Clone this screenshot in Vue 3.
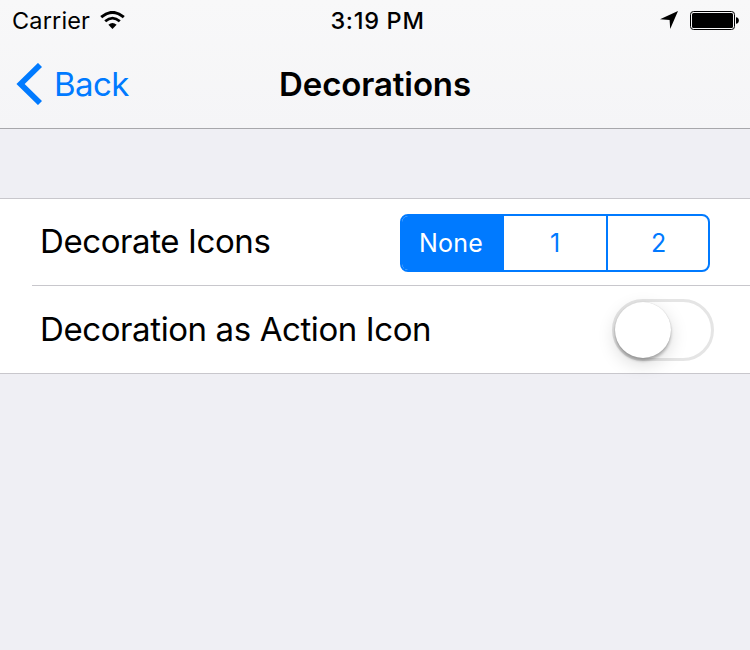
<template>
  <div class="screen">
    <header class="top-bar">
      <div class="status-bar">
        <div class="status-left">
          <span class="carrier">Carrier</span>
          <svg class="wifi" width="26" height="19" viewBox="0 0 26 19">
            <path d="M1.2 6.2Q12.5 -3.4 23.8 6.2" fill="none" stroke="#000" stroke-width="3" />
            <path d="M5.2 10.3Q12.5 4 19.8 10.3" fill="none" stroke="#000" stroke-width="2.8" />
            <path d="M8.4 13.7Q12.5 10.1 16.6 13.7L12.5 18Z" fill="#000" />
          </svg>
        </div>
        <span class="time">3:19 PM</span>
        <div class="status-right">
          <svg class="location" width="18" height="18" viewBox="0 0 18 18">
            <path d="M18 0L0 8.2L9.6 8.9L10.2 18Z" fill="#000" />
          </svg>
          <svg class="battery" width="49" height="19" viewBox="0 0 49 19">
            <rect x="0.5" y="0.5" width="44" height="18" rx="3" fill="none" stroke="#000" />
            <rect x="2" y="2" width="41" height="15" rx="1.5" fill="#000" />
            <path d="M46 6.2C49.8 6.2 49.8 12.8 46 12.8Z" fill="#000" />
          </svg>
        </div>
      </div>

      <nav class="nav-bar">
        <button class="back-button">
          <svg width="26" height="42" viewBox="0 0 26 42">
            <path d="M24 2L4.6 21L24 40" fill="none" stroke="#007aff" stroke-width="5.8" />
          </svg>
          <span class="back-label">Back</span>
        </button>
        <h1 class="title">Decorations</h1>
      </nav>
    </header>

    <section class="group">
      <div class="row">
        <span class="label">Decorate Icons</span>
        <div class="segmented">
          <button
            v-for="(option, index) in options"
            :key="option"
            class="segment"
            :class="{ active: selected === index }"
            @click="selected = index"
          >
            {{ option }}
          </button>
        </div>
      </div>
      <div class="row row-switch">
        <span class="label">Decoration as Action Icon</span>
        <button
          class="switch"
          :class="{ on: actionIcon }"
          role="switch"
          :aria-checked="actionIcon"
          @click="actionIcon = !actionIcon"
        >
          <span class="knob"></span>
        </button>
      </div>
    </section>
  </div>
</template>

<script setup>
import { ref } from "vue";

const options = ["None", "1", "2"];
const selected = ref(0);
const actionIcon = ref(false);
</script>

<style>
body {
  margin: 0;
  background: #efeff4;
}
</style>

<style scoped>
.screen {
  width: 750px;
  height: 650px;
  overflow: hidden;
  background: #efeff4;
  color: #000;
  font-family: Inter, "Liberation Sans", sans-serif;
}

button {
  margin: 0;
  padding: 0;
  border: 0;
  background: none;
  font-family: inherit;
  cursor: pointer;
}

svg {
  display: block;
  flex-shrink: 0;
}

.top-bar {
  box-sizing: border-box;
  height: 129px;
  background: linear-gradient(#f8f8f9, #f5f5f7);
  border-bottom: 1px solid #a7a7ab;
}

.status-bar,
.nav-bar {
  display: grid;
  grid-template-columns: 1fr auto 1fr;
  align-items: center;
}

.status-bar {
  height: 40px;
  padding: 0 11px 0 12px;
  font-size: 23.5px;
}

.status-left {
  display: flex;
  align-items: center;
}

.carrier {
  width: 88px;
  letter-spacing: 0.15px;
}

.time {
  padding-left: 4px;
  font-weight: 500;
  letter-spacing: 0.7px;
}

.status-right {
  display: flex;
  justify-content: flex-end;
  align-items: center;
  gap: 12px;
}

.nav-bar {
  height: 88px;
  padding: 0 16px;
}

.back-button {
  display: flex;
  align-items: center;
  color: #007aff;
}

.back-label {
  margin-left: 12px;
  font-size: 33px;
  letter-spacing: -0.6px;
}

.title {
  margin: 0;
  font-size: 33px;
  font-weight: 600;
  letter-spacing: -0.1px;
}

.group {
  margin-top: 69px;
  background: #fff;
  border-top: 1px solid #c8c7cc;
  border-bottom: 1px solid #c8c7cc;
}

.row {
  display: flex;
  justify-content: space-between;
  align-items: center;
  height: 86px;
  margin-left: 32px;
  padding: 0 40px 0 8px;
  border-bottom: 1px solid #c8c7cc;
}

.row-switch {
  height: 87px;
  padding-right: 36px;
  border-bottom: 0;
}

.label {
  padding-bottom: 2px;
  font-size: 33px;
  letter-spacing: -0.4px;
}

.segmented {
  box-sizing: border-box;
  display: grid;
  grid-template-columns: 102px 104px 1fr;
  width: 310px;
  height: 58px;
  margin-top: 2px;
  border: 2px solid #007aff;
  border-radius: 8px;
  overflow: hidden;
}

.segment {
  color: #007aff;
  font-size: 25px;
}

.segment + .segment {
  border-right: 2px solid #007aff;
}

.segment:last-child {
  padding-left: 1px;
  border-right: 0;
}

.segment:first-child {
  padding-right: 4px;
  letter-spacing: 0.2px;
}

.segment.active {
  background: #007aff;
  color: #fff;
}

.switch {
  box-sizing: border-box;
  width: 102px;
  height: 62px;
  margin-top: 1px;
  border: 3px solid #e5e5e5;
  border-radius: 31px;
}

.switch.on {
  border-color: #4cd964;
  background: #4cd964;
}

.knob {
  display: block;
  width: 56px;
  height: 56px;
  border-radius: 50%;
  background: #fff;
  box-shadow:
    0 0 1px rgba(0, 0, 0, 0.2),
    0 3px 3px rgba(0, 0, 0, 0.25),
    0 6px 18px rgba(0, 0, 0, 0.15);
}

.switch.on .knob {
  margin-left: 40px;
}
</style>
